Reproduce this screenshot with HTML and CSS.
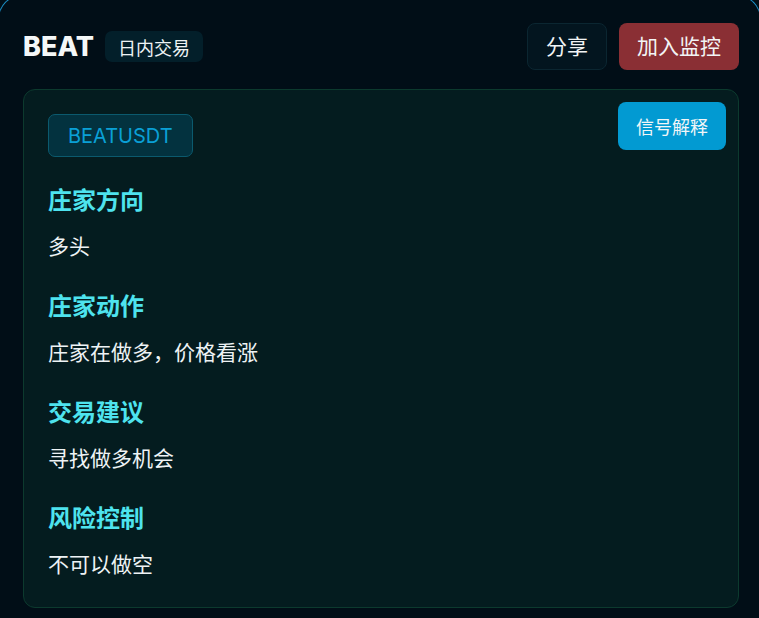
FILE: index.html
```html
<!DOCTYPE html>
<html lang="zh-CN">
<head>
<meta charset="utf-8">
<title>BEAT</title>
<link rel="stylesheet" href="styles.css">
</head>
<body>
<div class="panel">
  <header class="header">
    <div class="title-group">
      <h1 class="symbol">BEAT</h1>
      <span class="mode-tag">日内交易</span>
    </div>
    <div class="actions">
      <button class="btn btn-share">分享</button>
      <button class="btn btn-monitor">加入监控</button>
    </div>
  </header>
  <section class="card">
    <button class="btn-explain">信号解释</button>
    <span class="pair-tag">BEATUSDT</span>
    <div class="sections">
      <div class="item">
        <h2 class="item-title">庄家方向</h2>
        <p class="item-text">多头</p>
      </div>
      <div class="item">
        <h2 class="item-title">庄家动作</h2>
        <p class="item-text">庄家在做多，价格看涨</p>
      </div>
      <div class="item">
        <h2 class="item-title">交易建议</h2>
        <p class="item-text">寻找做多机会</p>
      </div>
      <div class="item">
        <h2 class="item-title">风险控制</h2>
        <p class="item-text">不可以做空</p>
      </div>
    </div>
  </section>
</div>
</body>
</html>
```

FILE: styles.css
```css
* { box-sizing: border-box; }
html, body {
  margin: 0;
  padding: 0;
  background: #010e17;
  height: 100%;
  overflow: hidden;
}
body {
  font-family: "Inter", "Noto Sans CJK SC", sans-serif;
  color: #eef3f5;
}
.panel {
  position: relative;
  padding: 23px 20px 0 23px;
  min-height: 100%;
}
.panel::before {
  content: "";
  position: absolute;
  left: -2px;
  right: -2px;
  top: -5px;
  height: 200px;
  border: 1px solid #1b8fc6;
  border-bottom: none;
  border-radius: 24px 24px 0 0;
  pointer-events: none;
}
.header {
  display: flex;
  align-items: center;
  justify-content: space-between;
  height: 47px;
  margin-bottom: 19px;
}
.title-group {
  display: flex;
  align-items: center;
  gap: 11px;
}
.symbol {
  margin: 0;
  font-size: 27px;
  font-weight: 800;
  color: #f4f7f8;
  letter-spacing: 0;
  line-height: 1;
}
.mode-tag {
  display: inline-flex;
  align-items: center;
  height: 31px;
  padding: 0 13px;
  border-radius: 7px;
  background: #031f2a;
  font-size: 18px;
  color: #eef3f5;
}
.actions {
  display: flex;
  gap: 12px;
}
.btn {
  height: 47px;
  border-radius: 8px;
  font-family: inherit;
  font-size: 21px;
  color: #f2f4f5;
  cursor: pointer;
  line-height: 1;
}
.btn-share {
  width: 80px;
  background: #03151f;
  border: 1px solid #0b2631;
}
.btn-monitor {
  width: 120px;
  background: #8a2f34;
  border: none;
}
.card {
  position: relative;
  background: #041c1f;
  border: 1px solid #0c3a2e;
  border-radius: 12px;
  padding: 24px 24px 26px;
}
.btn-explain {
  position: absolute;
  top: 12px;
  right: 12px;
  width: 108px;
  height: 48px;
  border: none;
  border-radius: 8px;
  background: #029ad2;
  color: #f2f6f8;
  font-family: inherit;
  font-size: 18px;
  cursor: pointer;
}
.pair-tag {
  display: inline-flex;
  align-items: center;
  height: 43px;
  padding: 0 19px;
  border: 1px solid #0b5a6e;
  border-radius: 7px;
  background: #03323f;
  color: #0aa0d6;
  font-size: 20px;
}
.sections {
  display: flex;
  flex-direction: column;
  gap: 28px;
  margin-top: 28px;
}
.item {
  display: flex;
  flex-direction: column;
  gap: 14px;
}
.item-title {
  margin: 0;
  font-size: 24px;
  line-height: 32px;
  font-weight: 700;
  color: #4ee3ee;
}
.item-text {
  margin: 0;
  font-size: 21px;
  line-height: 32px;
  color: #eef3f5;
}
```
